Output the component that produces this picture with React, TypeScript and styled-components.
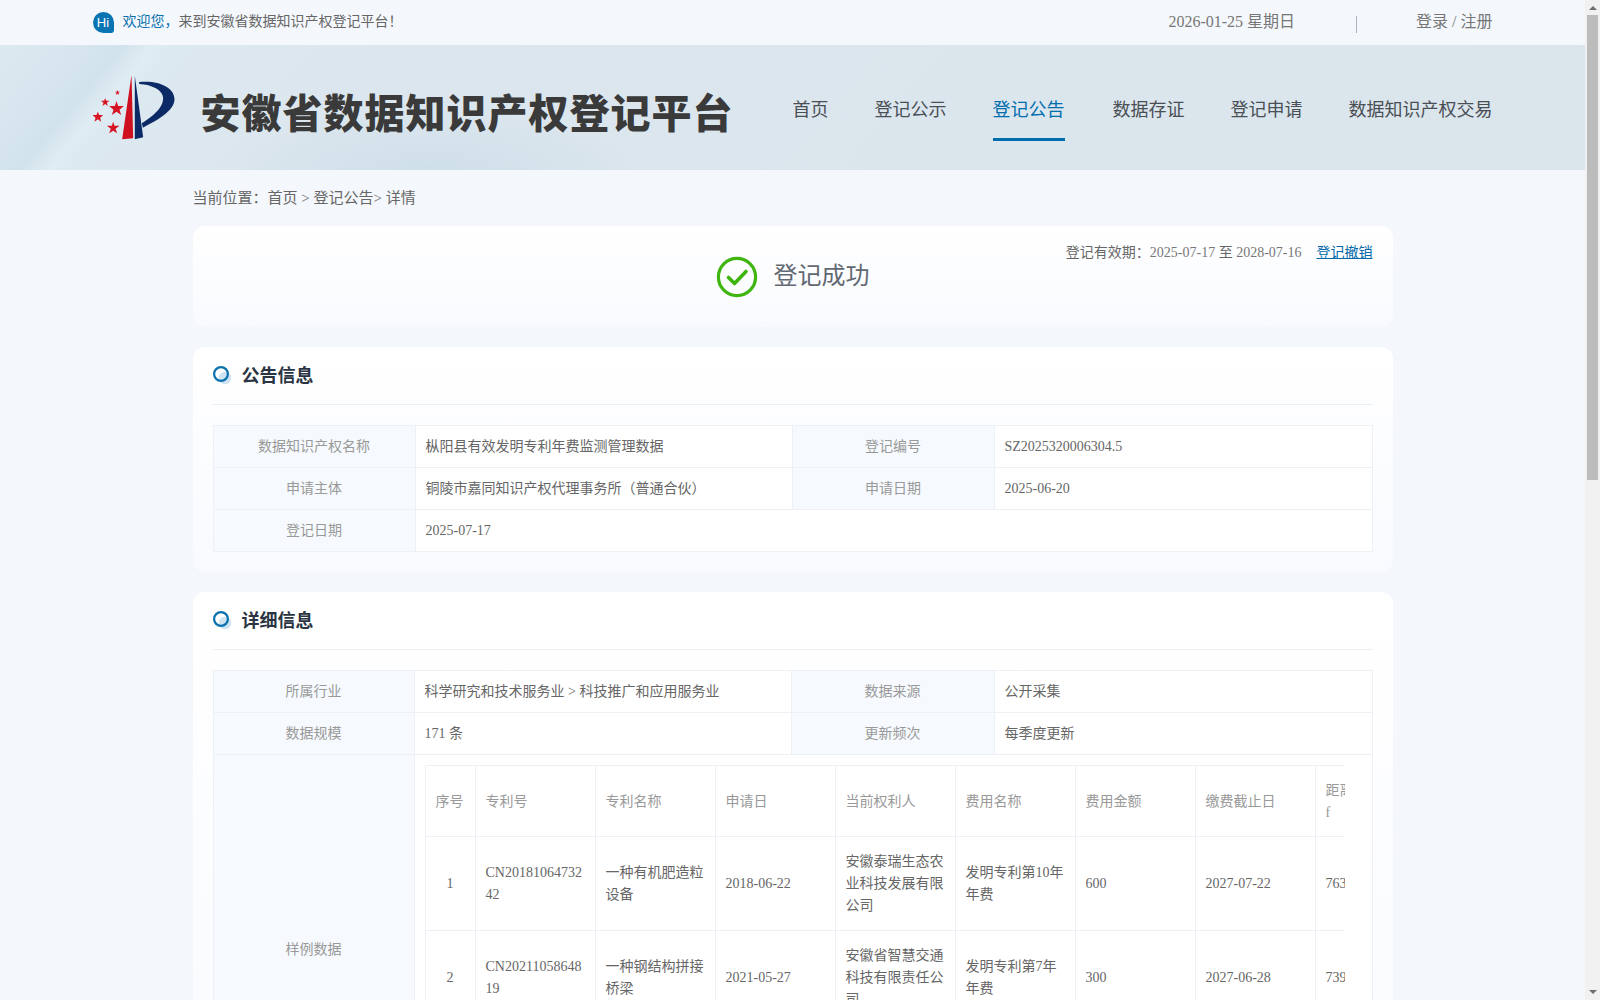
import styled, { createGlobalStyle } from 'styled-components'

const GlobalStyle = createGlobalStyle`
  html, body {
    margin: 0;
    padding: 0;
    height: 100%;
    overflow: hidden;
  }

  body {
    background: #f4f7fc;
    color: #666;
    font-family: "Liberation Serif", "Noto Sans CJK SC", serif;
    font-size: 14px;
  }
`

const navItems = ['首页', '登记公示', '登记公告', '数据存证', '登记申请', '数据知识产权交易']

const sampleRows = [
  ['1', 'CN2018106473242', '一种有机肥造粒设备', '2018-06-22', '安徽泰瑞生态农业科技发展有限公司', '发明专利第10年年费', '600', '2027-07-22', '763'],
  ['2', 'CN2021105864819', '一种钢结构拼接桥梁', '2021-05-27', '安徽省智慧交通科技有限责任公司', '发明专利第7年年费', '300', '2027-06-28', '739'],
  ['3', 'CN2020107351268', '一种节能型污水处理装置', '2020-07-24', '安徽华茂生态农业科技发展有限公司', '发明专利第6年年费', '900', '2027-07-24', '765']
]

const sampleHead = ['序号', '专利号', '专利名称', '申请日', '当前权利人', '费用名称', '费用金额', '缴费截止日', '距离截止日天数 f']

function LogoMark() {
  return (
    <LogoSvg width="82" height="65" viewBox="40 45 245 195">
      <path d="M155 45 L160 235 L127 238 Z" fill="#cf1020" />
      <path d="M165 48 L190 232 L165 238 Z" fill="#0c2a66" />
      <path d="M178 66 C240 60 284 84 284 118 C284 152 232 182 189 203 L186 190 C216 170 250 146 250 115 C250 90 216 74 178 72 Z" fill="#0c2a66" />
      <polygon points="110,123 115,138 132,138 119,149 124,165 110,155 96,165 101,149 88,138 105,138" fill="#d81424" />
      <polygon points="100,185 104,197 119,197 107,206 112,220 100,212 88,220 93,206 81,197 96,197" fill="#d81424" />
      <polygon points="54,155 58,165 70,165 61,173 64,185 54,178 44,185 47,173 38,165 50,165" fill="#d81424" />
      <polygon points="76,114 79,122 89,122 81,128 84,138 76,132 68,138 71,128 63,122 73,122" fill="#d81424" />
      <polygon points="113,90 115,95 121,95 116,98 118,105 113,101 108,105 110,98 105,95 111,95" fill="#d81424" />
    </LogoSvg>
  )
}

function SectionDot() {
  return (
    <svg width="20" height="20" viewBox="0 0 20 20">
      <circle cx="12" cy="12" r="6.2" fill="#cfe3f3" />
      <circle cx="8" cy="8" r="6.9" fill="none" stroke="#0a71ad" strokeWidth="2.2" />
    </svg>
  )
}

function SuccessIcon() {
  return (
    <svg width="42" height="42" viewBox="0 0 42 42">
      <circle cx="21" cy="21" r="18.6" fill="none" stroke="#3fb50f" strokeWidth="3.2" />
      <path d="M12.5 21.5 L18.5 27.5 L30 15.5" fill="none" stroke="#3fb50f" strokeWidth="3.6" strokeLinecap="round" strokeLinejoin="round" />
    </svg>
  )
}

export default function App() {
  return (
    <Page>
      <GlobalStyle />

      <Content>
        <TopBar>
          <TopInner>
            <Welcome>
              <HiBubble>Hi</HiBubble>
              <WelcomeText>
                <WelcomeStrong>欢迎您，</WelcomeStrong>
                来到安徽省数据知识产权登记平台！
              </WelcomeText>
            </Welcome>

            <TopRight>
              <TopText>2026-01-25 星期日</TopText>
              <TopDivider />
              <TopText>登录 / 注册</TopText>
            </TopRight>
          </TopInner>
        </TopBar>

        <Header>
          <HeaderInner>
            <Brand>
              <LogoMark />
              <BrandTitle>安徽省数据知识产权登记平台</BrandTitle>
            </Brand>

            <Nav>
              {navItems.map((item) => (
                <NavItem key={item} $active={item === '登记公告'}>{item}</NavItem>
              ))}
            </Nav>
          </HeaderInner>
        </Header>

        <Main>
          <Breadcrumb>当前位置：首页 &gt; 登记公告&gt; 详情</Breadcrumb>

          <StatusCard>
            <SuccessIcon />
            <StatusText>登记成功</StatusText>

            <Validity>
              登记有效期：<ValidityDate>2025-07-17</ValidityDate> 至 <ValidityDate>2028-07-16</ValidityDate>
              <RevokeLink href="#">登记撤销</RevokeLink>
            </Validity>
          </StatusCard>

          <Card>
            <CardTitle>
              <SectionDot />
              <h2>公告信息</h2>
            </CardTitle>

            <InfoTable>
              <colgroup>
                <col width="202" />
                <col width="377" />
                <col width="202" />
                <col width="378" />
              </colgroup>
              <tbody>
                <tr>
                  <LabelCell>数据知识产权名称</LabelCell>
                  <ValueCell>枞阳县有效发明专利年费监测管理数据</ValueCell>
                  <LabelCell>登记编号</LabelCell>
                  <ValueCell>SZ2025320006304.5</ValueCell>
                </tr>
                <tr>
                  <LabelCell>申请主体</LabelCell>
                  <ValueCell>铜陵市嘉同知识产权代理事务所（普通合伙）</ValueCell>
                  <LabelCell>申请日期</LabelCell>
                  <ValueCell>2025-06-20</ValueCell>
                </tr>
                <tr>
                  <LabelCell>登记日期</LabelCell>
                  <ValueCell colSpan={3}>2025-07-17</ValueCell>
                </tr>
              </tbody>
            </InfoTable>
          </Card>

          <Card>
            <CardTitle>
              <SectionDot />
              <h2>详细信息</h2>
            </CardTitle>

            <InfoTable>
              <colgroup>
                <col width="201" />
                <col width="377" />
                <col width="203" />
                <col width="378" />
              </colgroup>
              <tbody>
                <tr>
                  <LabelCell>所属行业</LabelCell>
                  <ValueCell>科学研究和技术服务业 &gt; 科技推广和应用服务业</ValueCell>
                  <LabelCell>数据来源</LabelCell>
                  <ValueCell>公开采集</ValueCell>
                </tr>
                <tr>
                  <LabelCell>数据规模</LabelCell>
                  <ValueCell>171 条</ValueCell>
                  <LabelCell>更新频次</LabelCell>
                  <ValueCell>每季度更新</ValueCell>
                </tr>
                <tr>
                  <LabelCell>样例数据</LabelCell>
                  <SampleCell colSpan={3}>
                    <SampleScroll>
                      <SampleTable>
                        <thead>
                          <tr>
                            {sampleHead.map((title) => (
                              <SampleHead key={title}>{title}</SampleHead>
                            ))}
                          </tr>
                        </thead>
                        <tbody>
                          {sampleRows.map((row) => (
                            <tr key={row[0]}>
                              {row.map((value, i) => (
                                <SampleData key={i} $center={i === 0}>{value}</SampleData>
                              ))}
                            </tr>
                          ))}
                        </tbody>
                      </SampleTable>
                    </SampleScroll>
                  </SampleCell>
                </tr>
              </tbody>
            </InfoTable>
          </Card>
        </Main>
      </Content>

      <ScrollTrack>
        <ScrollArrow />
        <ScrollThumb />
        <ScrollArrow $down />
      </ScrollTrack>
    </Page>
  )
}

const Page = styled.div`
  height: 1000px;
  display: flex;
  overflow: hidden;
`

const Content = styled.div`
  flex: 1;
  min-width: 0;
  overflow: hidden;
`

const ScrollTrack = styled.div`
  flex: none;
  width: 15px;
  background: #f1f1f1;
  display: flex;
  flex-direction: column;
  align-items: center;
`

const ScrollArrow = styled.i<{ $down?: boolean }>`
  flex: none;
  width: 0;
  height: 0;
  margin: ${(p) => (p.$down ? 'auto 0 6px' : '6px 0 5px')};
  border-left: 4px solid transparent;
  border-right: 4px solid transparent;
  border-${(p) => (p.$down ? 'top' : 'bottom')}: 4px solid #6e6e6e;
`

const ScrollThumb = styled.div`
  flex: none;
  width: 11px;
  height: 465px;
  background: #bcbcbc;
`

const TopBar = styled.div`
  height: 45px;
  background: #f4f8fc;
`

const TopInner = styled.div`
  width: 1400px;
  height: 45px;
  margin: 0 auto;
  display: flex;
  align-items: center;
  justify-content: space-between;
`

const Welcome = styled.div`
  display: flex;
  align-items: center;
  color: #666;
  font-size: 14px;
`

const HiBubble = styled.span`
  width: 21px;
  height: 21px;
  margin-right: 9px;
  border-radius: 50% 50% 3px 50%;
  background: #0b74b3;
  color: #fff;
  font-family: "Liberation Sans", sans-serif;
  font-size: 13px;
  line-height: 21px;
  text-align: center;
`

const WelcomeText = styled.span`
  padding-bottom: 5px;
`

const WelcomeStrong = styled.span`
  color: #0a71ad;
`

const TopRight = styled.div`
  display: flex;
  align-items: center;
  color: #777;
  font-size: 16px;
`

const TopText = styled.span`
  padding-bottom: 5px;
`

const TopDivider = styled.i`
  width: 1px;
  height: 17px;
  margin: 3px 59px 0 61px;
  background: #aab2ba;
`

const Header = styled.header`
  height: 125px;
  background:
    radial-gradient(ellipse 200px 60px at 430px 125px, #cfdfe9 0%, rgba(207, 223, 233, 0) 100%),
    linear-gradient(130deg, #dde9f1 0, #d8e6ef 50px, #d2e2ec 95px, #e0ecf3 118px, #dde9f0 135px, #dbe6ee 300px, #dae5ec 100%);
`

const HeaderInner = styled.div`
  width: 1400px;
  height: 125px;
  margin: 0 auto;
  display: flex;
  justify-content: space-between;
`

const Brand = styled.div`
  display: flex;
  align-items: center;
`

const LogoSvg = styled.svg`
  filter: blur(0.4px);
`

const BrandTitle = styled.h1`
  margin: 6px 0 0 26px;
  color: #3a3a3a;
  font-family: "Noto Sans CJK SC", sans-serif;
  font-size: 40px;
  font-weight: 900;
  letter-spacing: 1px;
  line-height: 48px;
`

const Nav = styled.nav`
  display: flex;
  gap: 46px;
  padding-top: 46px;
`

const NavItem = styled.a<{ $active?: boolean }>`
  box-sizing: border-box;
  height: 50px;
  margin-right: ${(p) => (p.$active ? '2px' : '0')};
  border-bottom: 3px solid ${(p) => (p.$active ? '#006dad' : 'transparent')};
  color: ${(p) => (p.$active ? '#006dad' : '#4a4f55')};
  font-size: 18px;
  line-height: 38px;
  cursor: pointer;
`

const Main = styled.main`
  width: 1200px;
  margin: 0 auto;
`

const Breadcrumb = styled.div`
  height: 56px;
  color: #666;
  font-size: 15px;
  line-height: 56px;
`

const StatusCard = styled.section`
  position: relative;
  height: 101px;
  margin-bottom: 20px;
  border-radius: 12px;
  background: linear-gradient(#fff, #f8fafe);
  display: flex;
  align-items: center;
  justify-content: center;
  gap: 16px;
`

const StatusText = styled.span`
  padding-bottom: 6px;
  color: #626872;
  font-size: 24px;
`

const Validity = styled.div`
  position: absolute;
  top: 15px;
  right: 20px;
  color: #666;
  font-size: 14px;
`

const ValidityDate = styled.span`
  color: #777;
`

const RevokeLink = styled.a`
  margin-left: 15px;
  color: #0068a8;
  text-decoration: underline;
`

const Card = styled.section`
  margin-bottom: 20px;
  padding: 0 20px 20px;
  border-radius: 12px;
  background: linear-gradient(#fff, #f8fafe);
`

const CardTitle = styled.div`
  box-sizing: border-box;
  height: 58px;
  margin-bottom: 20px;
  border-bottom: 1px solid #ebeef3;
  display: flex;
  align-items: center;
  gap: 9px;

  h2 {
    margin: 0;
    padding-bottom: 3px;
    color: #2b3442;
    font-size: 18px;
    font-weight: 700;
  }
`

const InfoTable = styled.table`
  width: 1160px;
  border-collapse: collapse;
  table-layout: fixed;
  background: #fff;
`

const LabelCell = styled.td`
  box-sizing: border-box;
  height: 42px;
  padding: 0;
  border: 1px solid #edf0f5;
  background: #f6fafe;
  color: #999;
  line-height: 22px;
  text-align: center;
`

const ValueCell = styled.td`
  box-sizing: border-box;
  height: 42px;
  padding: 0 10px;
  border: 1px solid #edf0f5;
  color: #666;
  line-height: 22px;
`

const SampleCell = styled.td`
  padding: 10px 10px 9px;
  border: 1px solid #edf0f5;
`

const SampleScroll = styled.div`
  width: 920px;
  padding-bottom: 17px;
  overflow-x: auto;
`

const SampleTable = styled.table`
  width: 1010px;
  border-collapse: collapse;
  table-layout: fixed;
`

const SampleHead = styled.th`
  width: 120px;
  box-sizing: border-box;
  padding: 14px 10px 12px;
  border: 1px solid #edf0f5;
  color: #999;
  font-weight: 400;
  line-height: 22px;
  text-align: left;

  &:first-child {
    width: 50px;
  }
`

const SampleData = styled.td<{ $center?: boolean }>`
  padding: 14px 10px 13px;
  border: 1px solid #edf0f5;
  color: #666;
  line-height: 22px;
  word-break: break-all;
  text-align: ${(p) => (p.$center ? 'center' : 'left')};
`
